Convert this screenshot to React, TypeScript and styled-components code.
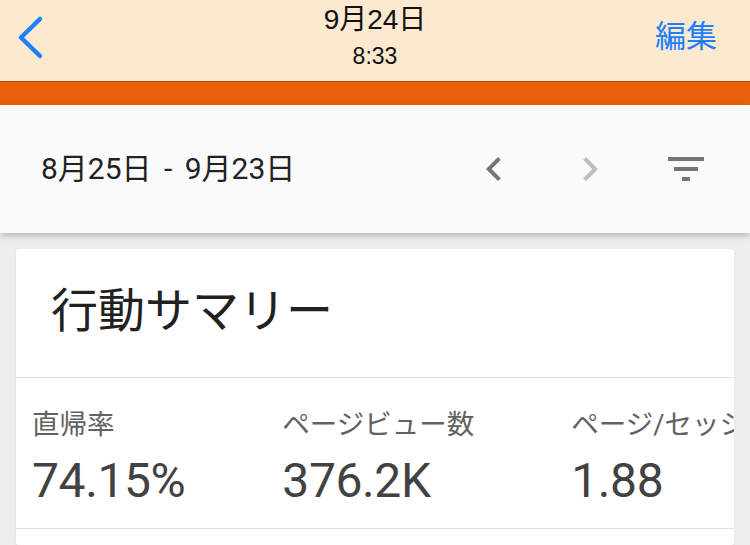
import React from "react";
import styled, { createGlobalStyle } from "styled-components";

const GlobalStyle = createGlobalStyle`
  html, body {
    margin: 0;
    padding: 0;
    background: #eeeeee;
    width: 750px;
    height: 545px;
    overflow: hidden;
  }
  * { box-sizing: border-box; }
`;

const Page = styled.div`
  width: 750px;
  height: 545px;
  overflow: hidden;
  background: #eeeeee;
  display: flex;
  flex-direction: column;
  font-family: Roboto, "Noto Sans CJK JP", sans-serif;
`;

const NavBar = styled.header`
  height: 82px;
  flex: none;
  background: #fde8d0;
  border-bottom: 1px solid #b4500e;
  display: grid;
  grid-template-columns: 1fr auto 1fr;
  align-items: start;
  font-family: "Liberation Sans", "Noto Sans CJK JP", sans-serif;
`;

const BackButton = styled.div`
  padding: 15px 0 0 16px;
  display: flex;
`;

const TitleStack = styled.div`
  display: flex;
  flex-direction: column;
  align-items: center;
  padding-top: 4px;
`;

const NavTitle = styled.div`
  font-size: 28px;
  line-height: 32px;
  color: #111111;
`;

const NavSubtitle = styled.div`
  font-size: 23px;
  line-height: 26px;
  margin-top: 7px;
  color: #111111;
`;

const EditButton = styled.div`
  justify-self: end;
  padding: 19px 33px 0 0;
  font-size: 31px;
  line-height: 36px;
  color: #1a80fb;
`;

const AccentBar = styled.div`
  height: 23px;
  flex: none;
  background: #e8600a;
`;

const DateBar = styled.div`
  height: 128px;
  flex: none;
  background: #fafafa;
  display: flex;
  align-items: center;
  padding: 0 16px 0 41px;
  position: relative;
  z-index: 1;
  box-shadow: 0 3px 6px rgba(0, 0, 0, 0.22);
`;

const DateRange = styled.div`
  flex: 1;
  font-size: 30px;
  line-height: 36px;
  word-spacing: 5px;
  color: #222222;
  white-space: pre;
`;

const IconButton = styled.div`
  width: 96px;
  height: 48px;
  display: flex;
  align-items: center;
  justify-content: center;
  color: ${(p: { $muted?: boolean }) => (p.$muted ? "#bdbdbd" : "#757575")};
`;

const Card = styled.section`
  margin: 16px 16px 0;
  background: #ffffff;
  border-radius: 3px;
  box-shadow: 0 1px 2px rgba(0, 0, 0, 0.08);
  overflow: hidden;
  flex: 1;
  display: flex;
  flex-direction: column;
`;

const CardHeader = styled.div`
  height: 129px;
  flex: none;
  border-bottom: 1px solid #e0e0e0;
  display: flex;
  align-items: center;
  padding: 0 0 4px 35px;
`;

const CardTitle = styled.h2`
  margin: 0;
  font-weight: 400;
  font-size: 47px;
  line-height: 56px;
  color: #212121;
`;

const MetricsRow = styled.div`
  height: 151px;
  flex: none;
  border-bottom: 1px solid #e0e0e0;
  display: flex;
  gap: 97px;
  padding: 31px 0 0 16px;
  white-space: nowrap;
`;

const Metric = styled.div`
  flex: none;
  display: flex;
  flex-direction: column;
`;

const MetricLabel = styled.div`
  font-size: 27.5px;
  line-height: 32px;
  color: #616161;
`;

const MetricValue = styled.div`
  font-size: 48px;
  line-height: 56px;
  margin-top: 12px;
  color: #424242;
  letter-spacing: -0.4px;
`;

const metrics = [
  { label: "直帰率", value: "74.15%" },
  { label: "ページビュー数", value: "376.2K" },
  { label: "ページ/セッション", value: "1.88" },
];

export default function App() {
  return (
    <Page>
      <GlobalStyle />
      <NavBar>
        <BackButton>
          <svg width="30" height="46" viewBox="0 0 30 46">
            <path
              d="M24 4 L5 22.5 L24 41"
              fill="none"
              stroke="#1a80fb"
              strokeWidth="4.5"
              strokeLinecap="round"
              strokeLinejoin="round"
            />
          </svg>
        </BackButton>
        <TitleStack>
          <NavTitle>9月24日</NavTitle>
          <NavSubtitle>8:33</NavSubtitle>
        </TitleStack>
        <EditButton>編集</EditButton>
      </NavBar>
      <AccentBar />
      <DateBar>
        <DateRange>8月25日 - 9月23日</DateRange>
        <IconButton>
          <svg width="48" height="48" viewBox="0 0 24 24" fill="currentColor">
            <path d="M15.41 7.41L14 6l-6 6 6 6 1.41-1.41L10.83 12z" />
          </svg>
        </IconButton>
        <IconButton $muted>
          <svg width="48" height="48" viewBox="0 0 24 24" fill="currentColor">
            <path d="M10 6L8.59 7.41 13.17 12l-4.58 4.59L10 18l6-6z" />
          </svg>
        </IconButton>
        <IconButton>
          <svg width="48" height="48" viewBox="0 0 24 24" fill="currentColor">
            <path d="M10 18h4v-2h-4v2zM3 6v2h18V6H3zm3 7h12v-2H6v2z" />
          </svg>
        </IconButton>
      </DateBar>
      <Card>
        <CardHeader>
          <CardTitle>行動サマリー</CardTitle>
        </CardHeader>
        <MetricsRow>
          {metrics.map((m) => (
            <Metric key={m.label}>
              <MetricLabel>{m.label}</MetricLabel>
              <MetricValue>{m.value}</MetricValue>
            </Metric>
          ))}
        </MetricsRow>
      </Card>
    </Page>
  );
}
